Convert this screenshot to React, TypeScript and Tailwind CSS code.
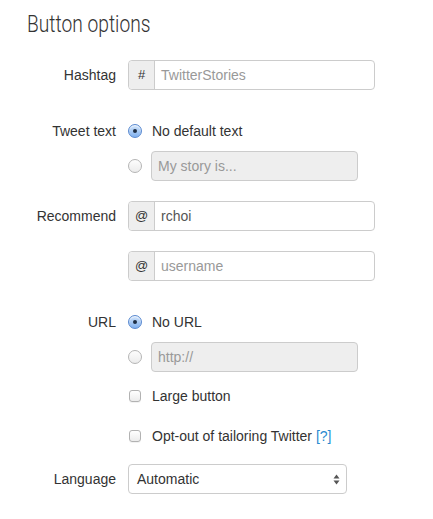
import React from "react";

const Radio = ({ checked }: { checked?: boolean }) =>
  checked ? (
    <span className="flex h-[14px] w-[14px] shrink-0 items-center justify-center rounded-full border border-[#5a8ad0] bg-[linear-gradient(#d4e6fb,#7fb0ef)] shadow-[inset_0_1px_1px_rgba(255,255,255,0.8)]">
      <span className="h-[4px] w-[4px] rounded-full bg-[#1d2d44]" />
    </span>
  ) : (
    <span className="h-[14px] w-[14px] shrink-0 rounded-full border border-[#b5b5b5] bg-[linear-gradient(#fdfdfd,#ececec)]" />
  );

const Checkbox = () => (
  <span className="h-[12px] w-[12px] shrink-0 rounded-[3px] border border-[#b2b2b2] bg-[linear-gradient(#ffffff,#ececec)] shadow-[0_1px_0_rgba(0,0,0,0.05)]" />
);

const Label = ({ children }: { children?: React.ReactNode }) => (
  <div className="w-[89px] shrink-0 text-right text-[14px] leading-[20px] text-[#333]">{children}</div>
);

const AddonInput = ({ sym, value, placeholder }: { sym: string; value?: string; placeholder?: string }) => (
  <div className="flex h-[30px] w-[247px] rounded-[4px] border border-[#cccccc] bg-white">
    <div className="flex w-[26px] items-center justify-center rounded-l-[4px] border-r border-[#cccccc] bg-[#eeeeee] text-[13px] text-[#333]">
      {sym}
    </div>
    <div className={"flex items-center pl-[6px] text-[14px] " + (value ? "text-[#555]" : "text-[#999]")}>
      {value ?? placeholder}
    </div>
  </div>
);

const DisabledInput = ({ placeholder }: { placeholder: string }) => (
  <div className="flex h-[30px] w-[207px] items-center rounded-[4px] border border-[#cccccc] bg-[#eeeeee] pl-[6px] text-[14px] text-[#999]">
    {placeholder}
  </div>
);

export default function App() {
  return (
    <div className="min-h-[519px] w-[433px] bg-white pl-[27px] font-['Liberation_Sans',Arial,sans-serif] text-[#333]">
      <h1 className="pt-[10px] text-[24px] leading-[28px] text-[#333]">
        <span className="inline-block origin-left scale-x-[0.8] font-['Roboto',sans-serif] font-light whitespace-nowrap">
          Button options
        </span>
      </h1>

      {/* Hashtag */}
      <div className="mt-[22px] flex items-center gap-[12px]">
        <Label>Hashtag</Label>
        <AddonInput sym="#" placeholder="TwitterStories" />
      </div>

      {/* Tweet text */}
      <div className="mt-[31px] flex items-center gap-[12px]">
        <Label>Tweet text</Label>
        <div className="flex items-center gap-[10px]">
          <Radio checked />
          <span className="text-[14px] leading-[20px]">No default text</span>
        </div>
      </div>
      <div className="mt-[10px] flex items-center gap-[12px]">
        <Label />
        <div className="flex items-center gap-[9px]">
          <Radio />
          <DisabledInput placeholder="My story is..." />
        </div>
      </div>

      {/* Recommend */}
      <div className="mt-[20px] flex items-center gap-[12px]">
        <Label>Recommend</Label>
        <AddonInput sym="@" value="rchoi" />
      </div>
      <div className="mt-[20px] flex items-center gap-[12px]">
        <Label />
        <AddonInput sym="@" placeholder="username" />
      </div>

      {/* URL */}
      <div className="mt-[31px] flex items-center gap-[12px]">
        <Label>URL</Label>
        <div className="flex items-center gap-[10px]">
          <Radio checked />
          <span className="text-[14px] leading-[20px]">No URL</span>
        </div>
      </div>
      <div className="mt-[10px] flex items-center gap-[12px]">
        <Label />
        <div className="flex items-center gap-[9px]">
          <Radio />
          <DisabledInput placeholder="http://" />
        </div>
      </div>

      <div className="mt-[14px] flex items-center gap-[12px]">
        <Label />
        <div className="flex items-center gap-[11px] pl-px">
          <Checkbox />
          <span className="text-[14px] leading-[20px]">Large button</span>
        </div>
      </div>
      <div className="mt-[20px] flex items-center gap-[12px]">
        <Label />
        <div className="flex items-center gap-[11px] pl-px">
          <Checkbox />
          <span className="text-[14px] leading-[20px]">
            Opt-out of tailoring Twitter <span className="text-[#2a8bd0]">[?]</span>
          </span>
        </div>
      </div>

      {/* Language */}
      <div className="mt-[18px] flex items-center gap-[12px]">
        <Label>Language</Label>
        <div className="flex h-[30px] w-[219px] items-center justify-between rounded-[4px] border border-[#cccccc] bg-white pl-[8px] pr-[6px] text-[14px] text-[#333]">
          <span>Automatic</span>
          <svg width="7" height="11" viewBox="0 0 7 11" className="shrink-0">
            <path d="M3.5 0.5 L6.5 4.5 L0.5 4.5 Z" fill="#555" />
            <path d="M3.5 10.5 L6.5 6.5 L0.5 6.5 Z" fill="#555" />
          </svg>
        </div>
      </div>
    </div>
  );
}
